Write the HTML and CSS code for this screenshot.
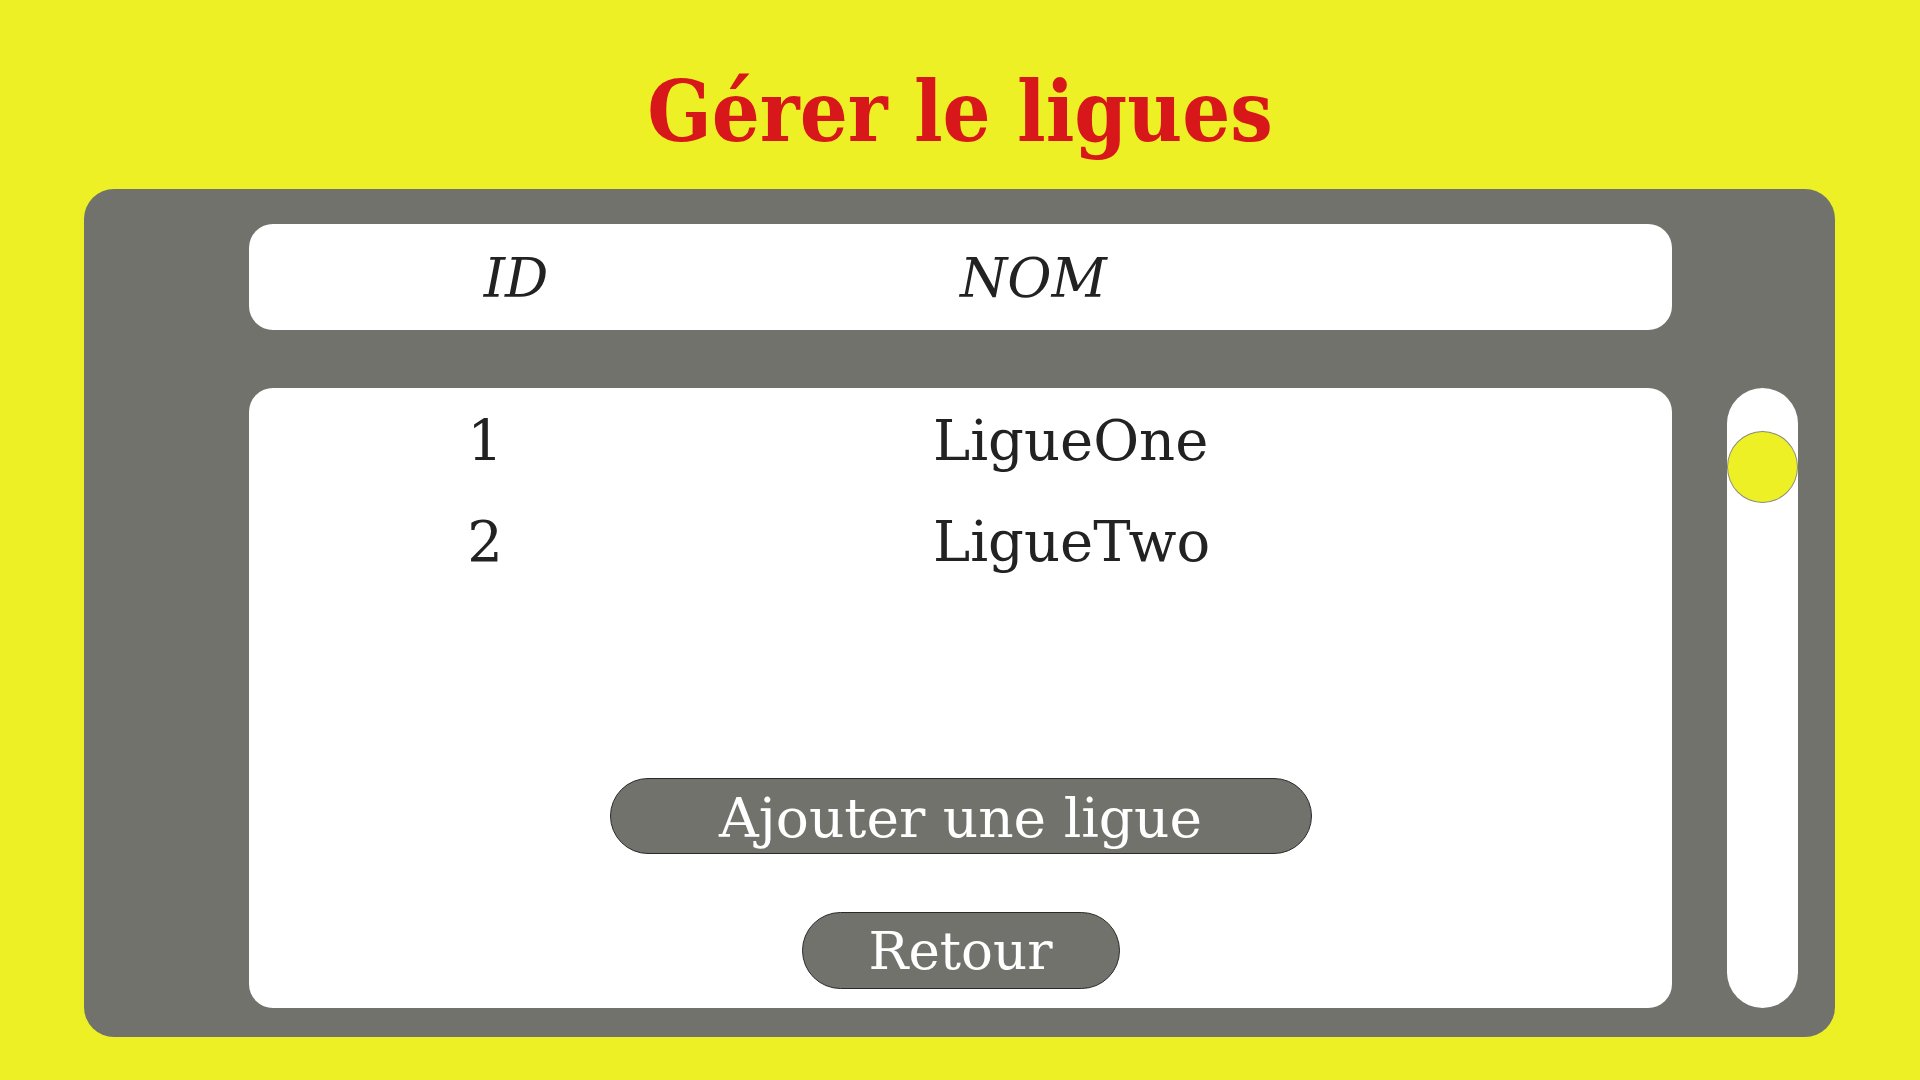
FILE: index.html
```html
<!DOCTYPE html>
<html lang="fr">
<head>
<meta charset="utf-8">
<title>Gérer le ligues</title>
<link rel="stylesheet" href="styles.css">
</head>
<body>
  <h1 class="title">Gérer le ligues</h1>
  <main class="panel">
    <div class="head-box">
      <span class="col-id">ID</span>
      <span class="col-nom">NOM</span>
    </div>
    <div class="spacer"></div>
    <div class="body-box">
      <div class="rows">
        <div class="row"><span class="cell-id">1</span><span class="cell-nom">LigueOne</span></div>
        <div class="row"><span class="cell-id">2</span><span class="cell-nom">LigueTwo</span></div>
      </div>
      <div class="actions">
        <button class="btn btn-add">Ajouter une ligue</button>
        <button class="btn btn-back">Retour</button>
      </div>
    </div>
    <div class="track"><div class="thumb"></div></div>
  </main>
</body>
</html>
```
FILE: styles.css
```css
html, body {
  margin: 0;
  padding: 0;
}
body {
  background: #EEF026;
  width: 1920px;
  height: 1080px;
  overflow: hidden;
  font-family: "DejaVu Serif", "Liberation Serif", serif;
  color: #222222;
}
.title {
  margin: 0;
  padding-top: 70px;
  height: 84px;
  margin-bottom: 35px;
  text-align: center;
  font-family: "DejaVu Serif Condensed", "DejaVu Serif", serif;
  font-stretch: condensed;
  font-weight: 700;
  font-size: 84px;
  line-height: 84px;
  color: #D7171A;
}
.panel {
  margin: 0 85px 0 84px;
  height: 848px;
  box-sizing: border-box;
  background: #72726C;
  border-radius: 30px;
  padding: 35px 37px 29px 165px;
  display: grid;
  grid-template-columns: 1423px 71px;
  grid-template-rows: 106px 58px 620px;
  column-gap: 55px;
}
.head-box {
  grid-column: 1;
  grid-row: 1;
  background: #fff;
  border-radius: 24px;
  display: grid;
  grid-template-columns: 534px 1fr;
  font-style: italic;
  font-size: 54px;
  line-height: 106px;
  padding-top: 2px;
  box-sizing: border-box;
}
.col-id { text-align: center; }
.col-nom { padding-left: 177px; }
.spacer { grid-column: 1 / 3; grid-row: 2; }
.body-box {
  grid-column: 1;
  grid-row: 3;
  background: #fff;
  border-radius: 24px;
  display: flex;
  flex-direction: column;
  padding: 2px 0 19px;
  box-sizing: border-box;
}
.rows {
  flex: 1;
}
.row {
  display: grid;
  grid-template-columns: 472px 1fr;
  font-size: 56px;
  line-height: 101px;
}
.cell-id { text-align: center; }
.cell-nom { padding-left: 212px; }
.actions {
  display: flex;
  flex-direction: column;
  align-items: center;
  gap: 58px;
}
.btn {
  background: #72726C;
  color: #ffffff;
  border: 1px solid #2a2a2a;
  font-family: "DejaVu Serif", "Liberation Serif", serif;
  padding: 0;
  box-sizing: border-box;
  cursor: pointer;
}
.btn-add {
  width: 702px;
  height: 76px;
  border-radius: 38px;
  font-size: 55px;
  line-height: 70px;
  padding-top: 4px;
}
.btn-back {
  width: 318px;
  height: 77px;
  border-radius: 39px;
  font-size: 53px;
  line-height: 73px;
  padding-top: 0;
}
.track {
  grid-column: 2;
  grid-row: 3;
  background: #fff;
  border-radius: 36px;
  display: flex;
  flex-direction: column;
}
.thumb {
  margin-top: 43px;
  height: 72px;
  box-sizing: border-box;
  background: #EEF026;
  border: 1px solid #8a8a7a;
  border-radius: 50%;
}
```
